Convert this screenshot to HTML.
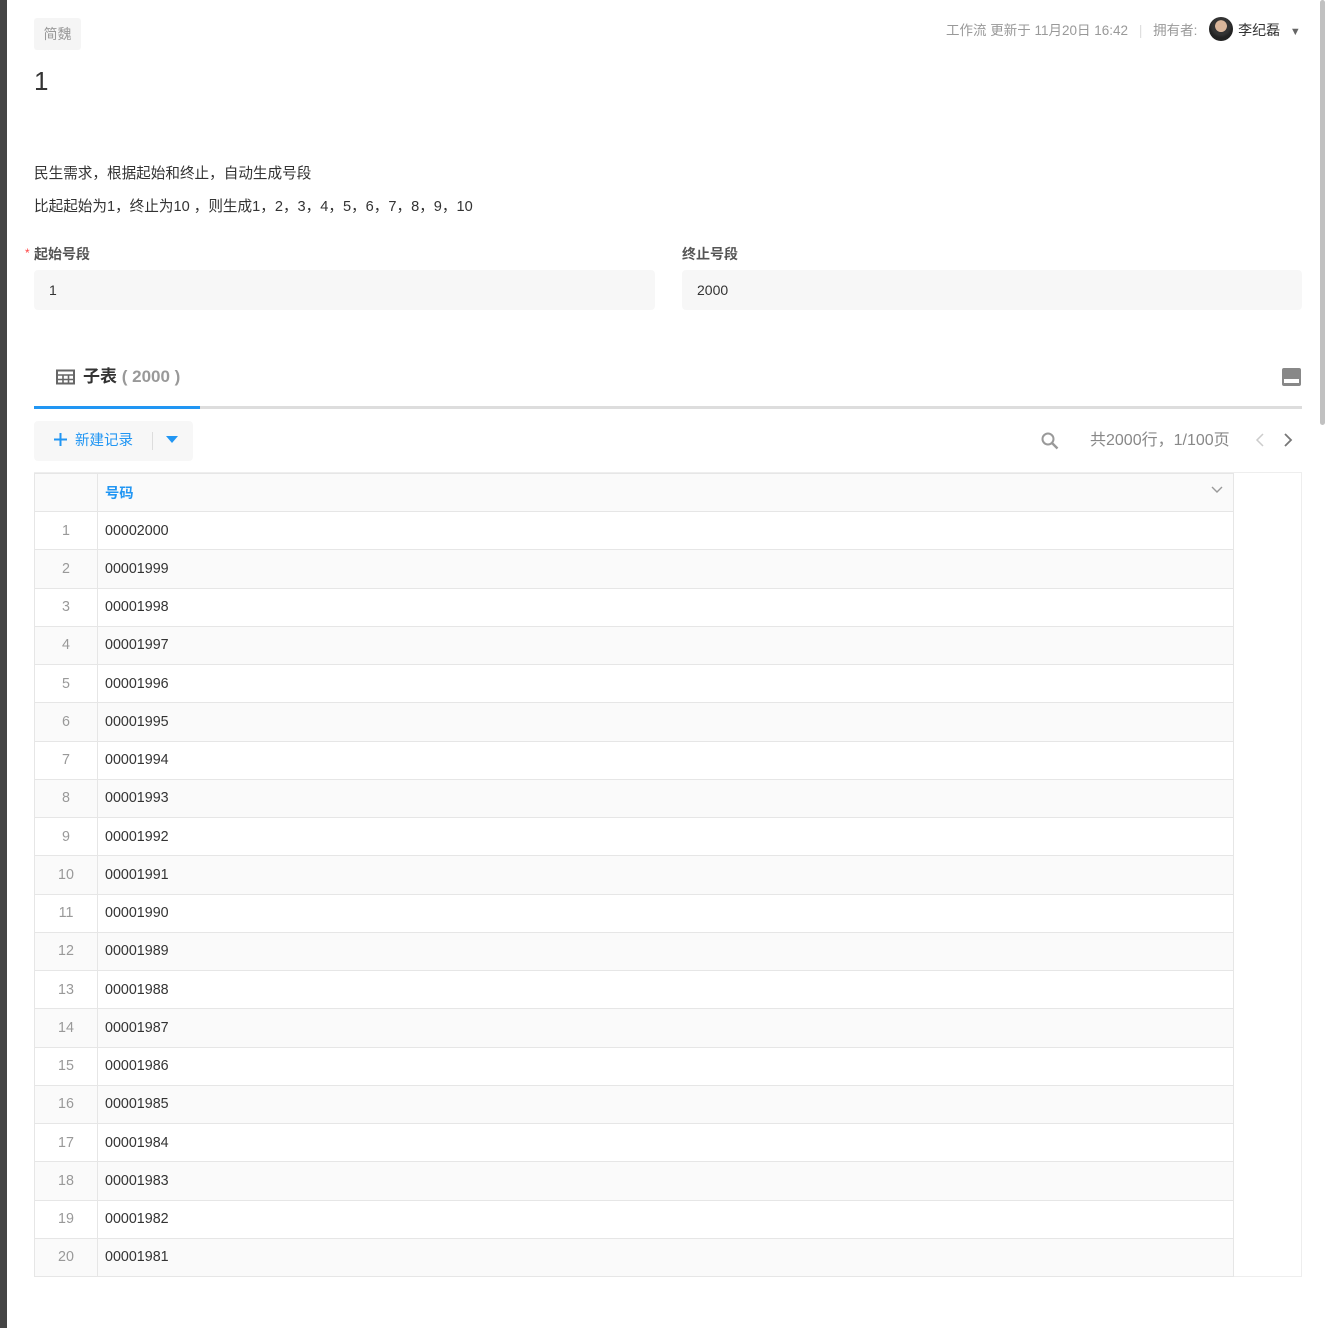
<!DOCTYPE html>
<html><head><meta charset="utf-8"><style>
*{margin:0;padding:0;box-sizing:border-box}
body{width:1325px;height:1328px;overflow:hidden;background:#fff;font-family:"Liberation Sans","Noto Sans CJK SC",sans-serif;color:#333;font-size:14px;position:relative}
.abs{position:absolute}
.lstrip{left:0;top:0;width:7px;height:1328px;background:#454545}
.sb{left:1320px;top:0;width:5px;height:425px;background:#c1c1c1;border-radius:3px}
.tag{left:34px;top:18px;width:47px;height:32px;background:#f5f5f5;border-radius:3px;color:#999;font-size:14px;line-height:32px;text-align:center}
.title{left:34px;top:64px;font-size:26px;color:#333;line-height:34px}
.meta{top:20px;left:946px;font-size:13.5px;color:#999;line-height:20px;white-space:nowrap}
.desc{left:34px;font-size:14.6px;color:#333;line-height:20px}
.lbl{font-size:14px;font-weight:bold;color:#555;top:244px;line-height:20px}
.inp{top:270px;height:40px;background:#f7f7f7;border-radius:4px;padding-left:15px;line-height:40px;font-size:14px;color:#333}
table{border-collapse:collapse;position:absolute;left:34px;top:473px;width:1200px}
td{height:38.25px;border:1px solid #e6e6e6;font-size:14.3px;color:#333}
tr:nth-child(odd) td{background:#fafafa}
td.n{width:63px;text-align:center;color:#999}
td.v{padding-left:7px}
tr.h td{background:#fafafa;height:38px;color:#2196f3;font-weight:bold}
</style></head><body>
<div class="abs lstrip"></div>
<div class="abs sb"></div>
<div class="abs tag">简魏</div>
<div class="abs title">1</div>
<div class="abs meta">工作流 更新于 11月20日 16:42 <span style="color:#ddd;margin:0 7px">|</span> 拥有者: <span style="display:inline-block;width:24px;height:24px;border-radius:50%;background:radial-gradient(circle at 50% 38%,#d9b59a 0 30%,#333 32% 45%,#222 60%);vertical-align:middle;margin:-4px 5px 0 8px"></span><span style="color:#333;font-size:14px">李纪磊</span> <span style="color:#666;font-size:11px;margin-left:6px">▼</span></div>
<div class="abs desc" style="top:164px">民生需求，根据起始和终止，自动生成号段</div>
<div class="abs desc" style="top:197px">比起起始为1，终止为10 ，则生成1，2，3，4，5，6，7，8，9，10</div>
<div class="abs" style="left:25px;top:246px;color:#f44;font-size:12px">*</div>
<div class="abs lbl" style="left:34px">起始号段</div>
<div class="abs lbl" style="left:682px">终止号段</div>
<div class="abs inp" style="left:34px;width:621px">1</div>
<div class="abs inp" style="left:682px;width:620px">2000</div>
<svg class="abs" style="left:56px;top:369px" width="19" height="16" viewBox="0 0 19 16"><rect x="1" y="1.5" width="17" height="13" fill="none" stroke="#666" stroke-width="2"/><path d="M1 6h17M1 10.5h17M7 6v8M12.5 6v8" stroke="#666" stroke-width="1.6"/></svg>
<div class="abs" style="left:83px;top:366px;font-size:17px;font-weight:bold;color:#333;line-height:22px">子表 <span style="color:#999">( 2000 )</span></div>
<svg class="abs" style="left:1282px;top:368px" width="19" height="18" viewBox="0 0 19 18"><rect x="0" y="0" width="19" height="18" rx="2" fill="#888"/><rect x="2" y="11" width="15" height="4" fill="#fff"/></svg>
<div class="abs" style="left:34px;top:406px;width:1268px;height:3px;background:#ddd"></div>
<div class="abs" style="left:34px;top:406px;width:166px;height:3px;background:#2196f3"></div>
<div class="abs" style="left:34px;top:421px;width:159px;height:40px;background:#f7f7f7;border-radius:4px"></div>
<svg class="abs" style="left:53px;top:432px" width="15" height="15"><path d="M7.5 1v13M1 7.5h13" stroke="#2196f3" stroke-width="2"/></svg>
<div class="abs" style="left:75px;top:431px;color:#2196f3;font-size:14.5px;line-height:20px">新建记录</div>
<div class="abs" style="left:152px;top:432px;width:1px;height:18px;background:#ddd"></div>
<svg class="abs" style="left:166px;top:436px" width="12" height="8"><path d="M0 0h12L6 7z" fill="#2196f3"/></svg>
<svg class="abs" style="left:1041px;top:432px" width="18" height="18"><circle cx="7" cy="7" r="5.5" fill="none" stroke="#999" stroke-width="2"/><path d="M11 11l5.5 5.5" stroke="#999" stroke-width="2.4"/></svg>
<div class="abs" style="left:1090px;top:431px;color:#888;font-size:16px;line-height:20px">共2000行，1/100页</div>
<svg class="abs" style="left:1255px;top:433px" width="10" height="14"><path d="M8 1L2 7l6 6" fill="none" stroke="#ccc" stroke-width="1.5"/></svg>
<svg class="abs" style="left:1283px;top:433px" width="10" height="14"><path d="M2 1l6 6-6 6" fill="none" stroke="#777" stroke-width="1.8"/></svg>
<div class="abs" style="left:34px;top:472px;width:1268px;height:805px;border:1px solid #eee"></div>
<table>
<tr class="h"><td class="n"></td><td class="v">号码<span style="float:right;margin-right:10px;color:#999;font-weight:normal"><svg width="12" height="8"><path d="M1 1l5 5 5-5" fill="none" stroke="#999" stroke-width="1.4"/></svg></span></td></tr>
<tr><td class="n">1</td><td class="v">00002000</td></tr>
<tr><td class="n">2</td><td class="v">00001999</td></tr>
<tr><td class="n">3</td><td class="v">00001998</td></tr>
<tr><td class="n">4</td><td class="v">00001997</td></tr>
<tr><td class="n">5</td><td class="v">00001996</td></tr>
<tr><td class="n">6</td><td class="v">00001995</td></tr>
<tr><td class="n">7</td><td class="v">00001994</td></tr>
<tr><td class="n">8</td><td class="v">00001993</td></tr>
<tr><td class="n">9</td><td class="v">00001992</td></tr>
<tr><td class="n">10</td><td class="v">00001991</td></tr>
<tr><td class="n">11</td><td class="v">00001990</td></tr>
<tr><td class="n">12</td><td class="v">00001989</td></tr>
<tr><td class="n">13</td><td class="v">00001988</td></tr>
<tr><td class="n">14</td><td class="v">00001987</td></tr>
<tr><td class="n">15</td><td class="v">00001986</td></tr>
<tr><td class="n">16</td><td class="v">00001985</td></tr>
<tr><td class="n">17</td><td class="v">00001984</td></tr>
<tr><td class="n">18</td><td class="v">00001983</td></tr>
<tr><td class="n">19</td><td class="v">00001982</td></tr>
<tr><td class="n">20</td><td class="v">00001981</td></tr>
</table>
</body></html>
